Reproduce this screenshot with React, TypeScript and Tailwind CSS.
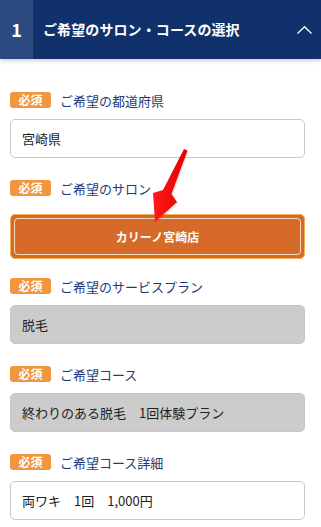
import React from "react";

const font = { fontFamily: '"Noto Sans CJK JP", "Noto Sans", sans-serif' };

function Label({ text }: { text: string }) {
  return (
    <div className="flex items-center h-[16px] gap-[9px]">
      <span className="flex items-center justify-center w-[41px] h-[16px] rounded-[3px] bg-[#f0963e] text-white text-[12px] font-bold leading-none">
        必須
      </span>
      <span className="text-[13px] text-[#1f3a78] leading-none">{text}</span>
    </div>
  );
}

function Box({ text, gray }: { text: string; gray?: boolean }) {
  return (
    <div
      className={
        "mt-[11px] h-[39px] rounded-[5px] flex items-center px-[11px] text-[13px] text-[#222] " +
        (gray ? "bg-[#cccccc] border border-[#c6c6c6]" : "bg-white border border-[#c8c8c8]")
      }
    >
      {text}
    </div>
  );
}

export default function App() {
  return (
    <div className="relative w-[321px] h-[527px] bg-white overflow-hidden" style={font}>
      <div className="relative z-10 flex h-[59px] bg-[#10316c] shadow-[0_2px_4px_rgba(0,0,0,0.18)]">
        <div className="w-[33px] bg-[#2b4b80] flex items-center justify-center text-white text-[18px] font-bold">
          1
        </div>
        <div className="flex-1 flex items-center pl-[10px] text-white text-[14px] font-bold tracking-[0.1px]">
          ご希望のサロン・コースの選択
        </div>
        <div className="flex items-center pr-[9px]">
          <svg width="15" height="8" viewBox="0 0 15 8">
            <polyline points="0.5,7.5 7.5,0.7 14.5,7.5" fill="none" stroke="white" strokeWidth="1.3" />
          </svg>
        </div>
      </div>

      <div className="px-[10px] pt-[33px] pr-[16px]">
        <Label text="ご希望の都道府県" />
        <Box text="宮崎県" />

        <div className="mt-[22px]">
          <Label text="ご希望のサロン" />
        </div>
        <div className="mt-[18px] h-[45px] rounded-[5px] bg-[#d66a28] border border-[#f0b050] p-[3px]">
          <div className="h-full rounded-[4px] border border-[#f6d8c0] flex items-center justify-center text-white text-[12px] font-bold">
            カリーノ宮崎店
          </div>
        </div>

        <div className="mt-[19px]">
          <Label text="ご希望のサービスプラン" />
        </div>
        <Box text="脱毛" gray />

        <div className="mt-[22px]">
          <Label text="ご希望コース" />
        </div>
        <Box text="終わりのある脱毛　1回体験プラン" gray />

        <div className="mt-[22px]">
          <Label text="ご希望コース詳細" />
        </div>
        <Box text="両ワキ　1回　1,000円" />
      </div>

      <svg className="absolute left-0 top-0 pointer-events-none" width="321" height="527">
        <defs>
          <linearGradient id="ag" x1="0" y1="0" x2="1" y2="0">
            <stop offset="0" stopColor="#ff1a1a" />
            <stop offset="1" stopColor="#e00000" />
          </linearGradient>
        </defs>
        <polygon
          points="184,149 187.5,150.5 171.5,194 177,202 155,222 153,193 163,190"
          fill="url(#ag)"
          transform="translate(1,1.5)"
          opacity="0.15"
        />
        <polygon points="184,149 187.5,150.5 171.5,194 177,202 155,222 153,193 163,190" fill="url(#ag)" />
      </svg>
    </div>
  );
}
